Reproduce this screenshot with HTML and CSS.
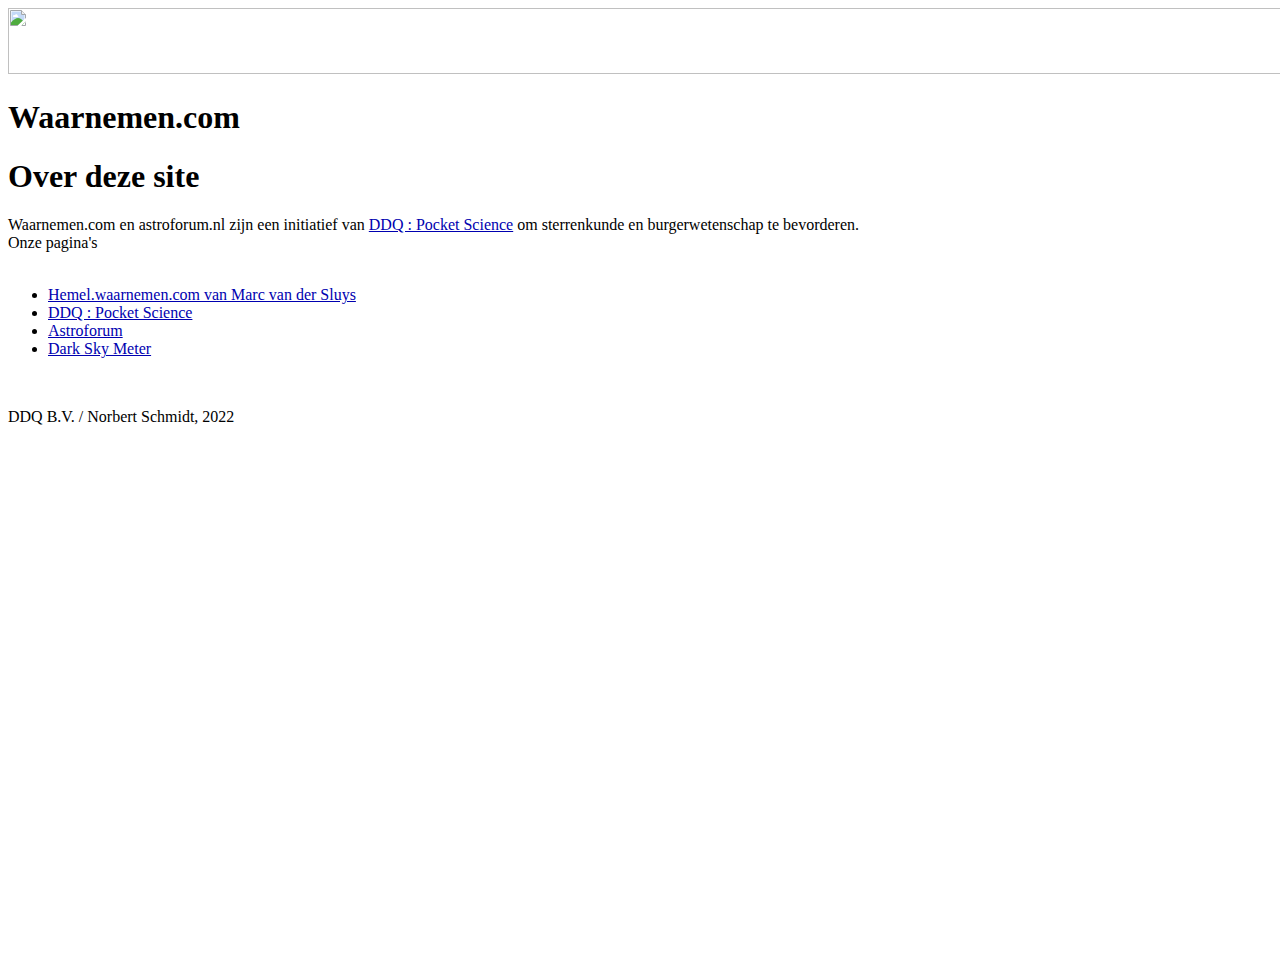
FILE: index.html
```html
<!DOCTYPE html>
<html lang="nl">
<head>
<meta charset="utf-8">
<title>Waarnemen.com</title>
<link rel="stylesheet" href="styles.css">
</head>
<body>
<header class="banner">
  <svg class="banner-icon" viewBox="0 0 16 16" aria-hidden="true">
    <path d="M.5.5h11l4 4v11H.5z" fill="#fff" stroke="#a3a7ab"/>
    <path d="M1.500 1.500h10v3.500h3V14.500h-13z" fill="#c3d9f7"/>
    <path d="M3 6.500c0-1.300 1.200-1.700 1.800-1.300C5.300 3.700 7.500 4 7.500 5.400c1 0 1.200 1.100.5 1.600H3.500z" fill="#fff"/>
    <path d="M1 15v-2.500C3.500 9.500 6 8 8 8s4.500 2 7 4.500V15z" fill="#4fab3f"/>
    <path d="M11.500.5v4h4" fill="#eee" stroke="#a3a7ab"/>
    <path d="M8.500 16.500L16.500 9" stroke="#fff" stroke-width="2.500"/>
    <path d="M11 16l5-4.500V16z" fill="#fff"/>
    <path d="M12 15.500h3.500v-3" fill="none" stroke="#a3a7ab"/>
  </svg>
</header>
<main class="content">
  <h1 class="title">Waarnemen.com</h1>
  <h1 class="title">Over deze site</h1>
  <p class="intro">Waarnemen.com en astroforum.nl zijn een initiatief van <a class="link" href="#">DDQ : Pocket Science</a> om sterrenkunde en burgerwetenschap te bevorderen.<br>Onze pagina's</p>
  <ul class="pages">
    <li><a class="link" href="#">Hemel.waarnemen.com van Marc van der Sluys</a></li>
    <li><a class="link" href="#">DDQ : Pocket Science</a></li>
    <li><a class="link" href="#">Astroforum</a></li>
    <li><a class="link" href="#">Dark Sky Meter</a></li>
  </ul>
</main>
<footer class="footer">DDQ B.V. / Norbert Schmidt, 2022</footer>
</body>
</html>
```

FILE: styles.css
```css
body {
  margin: 8px 0 8px 8px;
  background: #fff;
  color: #000;
  font-family: "Liberation Serif", "Times New Roman", serif;
  font-size: 16px;
  line-height: 18px;
}

.banner {
  box-sizing: border-box;
  height: 66px;
  padding: 1px;
  border: 1px solid #c0c0c0;
  border-right: 0;
}

.banner-icon {
  display: block;
  width: 16px;
  height: 16px;
}

.content {
  display: flow-root;
  padding-top: 3px;
}

.title {
  margin: 21px 8px 21px 0;
  font-size: 32px;
  line-height: 38px;
}

.intro {
  margin: 0 8px 34px 0;
}

.pages {
  margin: 0 8px 50px 0;
  padding-left: 40px;
}

.link {
  color: #0000b0;
  text-decoration: underline;
}
```
